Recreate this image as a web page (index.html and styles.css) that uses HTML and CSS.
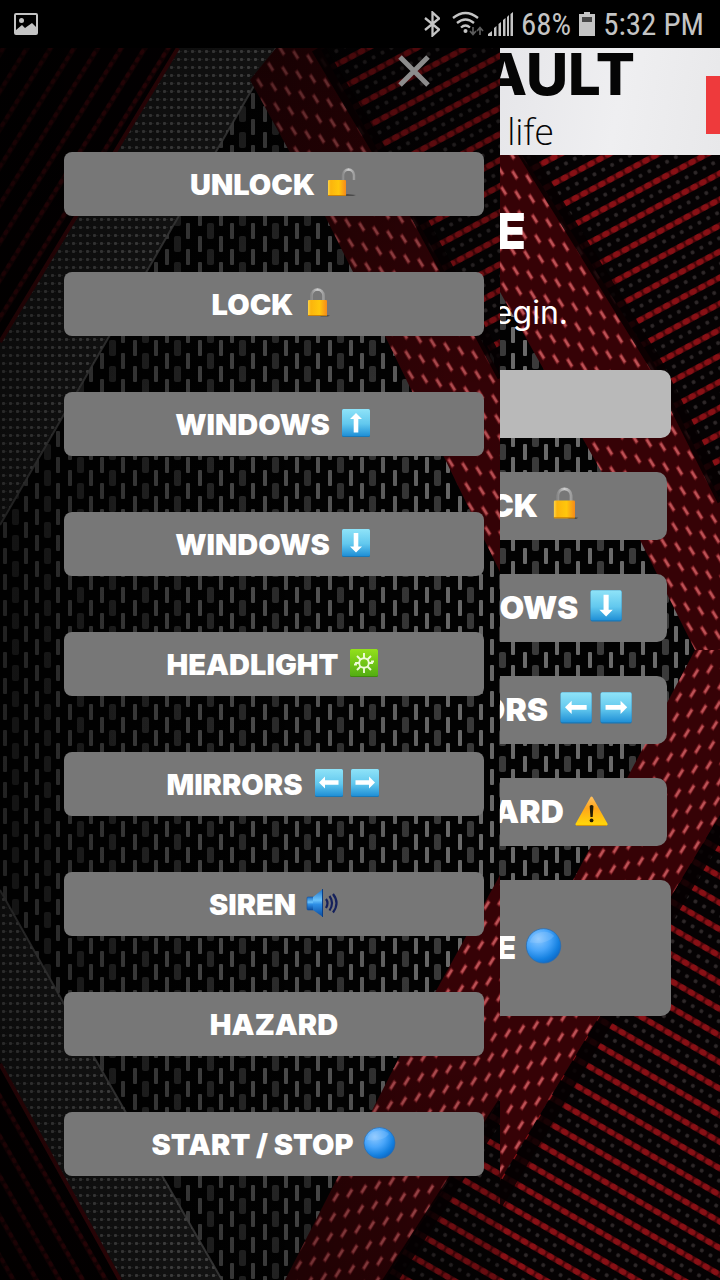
FILE: index.html
```html
<!DOCTYPE html>
<html lang="en">
<head>
<meta charset="utf-8">
<meta name="viewport" content="width=device-width, initial-scale=1">
<title>Remote</title>
<link rel="stylesheet" href="styles.css">
</head>
<body>
<svg class="defs" aria-hidden="true">
  <defs>
    <pattern id="mesh" width="65" height="26" patternUnits="userSpaceOnUse">
      <rect width="65" height="26" fill="#020202"/>
      <g fill="#6a6a6a">
        <rect x="3" y="2" width="4" height="16" rx="1"/>
        <rect x="24" y="2" width="4" height="16" rx="1"/>
        <rect x="35" y="-11" width="4" height="16" rx="1"/><rect x="35" y="15" width="4" height="16" rx="1"/>
        <rect x="56" y="-11" width="4" height="16" rx="1"/><rect x="56" y="15" width="4" height="16" rx="1"/>
      </g>
      <g fill="#3a3a3a">
        <rect x="12" y="-11" width="7" height="16" rx="2"/><rect x="12" y="15" width="7" height="16" rx="2"/>
        <rect x="44" y="2" width="7" height="16" rx="2"/>
      </g>
    </pattern>
    <pattern id="grain" width="7" height="8" patternUnits="userSpaceOnUse">
      <rect width="7" height="8" fill="#262626"/>
      <rect x="2" y="2" width="3" height="3" rx="1" fill="#858585"/>
      <rect x="5" y="3" width="2" height="1" fill="#484848"/>
    </pattern>
    <pattern id="strap-down" width="1" height="1" patternUnits="userSpaceOnUse" patternTransform="matrix(14 4 3 20 0 0)">
      <rect width="1" height="1" fill="#360206"/>
      <path d="M.3 .26L.6 .64" stroke="#7d1c22" stroke-width=".32"/>
      <path d="M.34 .3L.58 .6" stroke="#bd5357" stroke-width=".18"/>
    </pattern>
    <pattern id="strap-up" width="1" height="1" patternUnits="userSpaceOnUse" patternTransform="matrix(14 -4 3 -20 0 0)">
      <rect width="1" height="1" fill="#360206"/>
      <path d="M.3 .26L.6 .64" stroke="#7d1c22" stroke-width=".32"/>
      <path d="M.34 .3L.58 .6" stroke="#bd5357" stroke-width=".18"/>
    </pattern>
    <pattern id="rib-up" width="10" height="23" patternUnits="userSpaceOnUse" patternTransform="rotate(-28)">
      <rect width="10" height="23" fill="#050203"/>
      <rect y="5" width="10" height="6" fill="#4a0509"/>
      <ellipse cx="5" cy="8" rx="4" ry="3" fill="#881015"/>
      <ellipse cx="3" cy="19" rx="2" ry="2" fill="#2f292a"/>
    </pattern>
    <pattern id="rib-down" width="10" height="23" patternUnits="userSpaceOnUse" patternTransform="rotate(30)">
      <rect width="10" height="23" fill="#050203"/>
      <rect y="5" width="10" height="6" fill="#4a0509"/>
      <ellipse cx="5" cy="8" rx="4" ry="3" fill="#881015"/>
      <ellipse cx="3" cy="19" rx="2" ry="2" fill="#2f292a"/>
    </pattern>
    <pattern id="dim-up" width="9" height="20" patternUnits="userSpaceOnUse" patternTransform="rotate(-58)">
      <rect width="9" height="20" fill="#060001"/>
      <rect y="6" width="9" height="5" fill="#300307"/>
      <ellipse cx="4" cy="8" rx="3" ry="2" fill="#6a0a11"/>
    </pattern>
    <pattern id="dim-down" width="9" height="20" patternUnits="userSpaceOnUse" patternTransform="rotate(60)">
      <rect width="9" height="20" fill="#060001"/>
      <rect y="6" width="9" height="5" fill="#300307"/>
      <ellipse cx="4" cy="8" rx="3" ry="2" fill="#6a0a11"/>
    </pattern>
    <linearGradient id="shade" x1="0" x2="1" y1="0" y2="0">
      <stop offset="0" stop-color="#000" stop-opacity=".68"/>
      <stop offset=".9" stop-color="#000" stop-opacity="0"/>
    </linearGradient>
    <linearGradient id="shade-top" x1="0" x2="0" y1="0" y2="1">
      <stop offset="0" stop-color="#000" stop-opacity=".4"/>
      <stop offset=".3" stop-color="#000" stop-opacity=".05"/>
      <stop offset=".75" stop-color="#000" stop-opacity="0"/>
      <stop offset="1" stop-color="#000" stop-opacity=".25"/>
    </linearGradient>
    <linearGradient id="sky" x1="0" x2="0" y1="0" y2="1">
      <stop offset="0" stop-color="#8fe3f8"/><stop offset=".55" stop-color="#62c8ee"/><stop offset="1" stop-color="#1f8fd6"/>
    </linearGradient>
    <linearGradient id="leaf" x1="0" x2="0" y1="0" y2="1">
      <stop offset="0" stop-color="#93e01c"/><stop offset="1" stop-color="#53ad12"/>
    </linearGradient>
    <linearGradient id="gold" x1="0" x2="1" y1="0" y2="0">
      <stop offset="0" stop-color="#fdd54a"/><stop offset=".15" stop-color="#fbb40d"/><stop offset=".6" stop-color="#ffc70c"/><stop offset="1" stop-color="#f58a1a"/>
    </linearGradient>
    <linearGradient id="steel" x1="0" x2="1" y1="0" y2="0">
      <stop offset="0" stop-color="#8a8a8a"/><stop offset=".5" stop-color="#cfcfcf"/><stop offset="1" stop-color="#9c9c9c"/>
    </linearGradient>
    <linearGradient id="amber" x1="0" x2="0" y1="0" y2="1">
      <stop offset="0" stop-color="#ffbf5a"/><stop offset=".4" stop-color="#ffa51a"/><stop offset="1" stop-color="#ffd60a"/>
    </linearGradient>
    <linearGradient id="horn" x1="0" x2="0" y1="0" y2="1">
      <stop offset="0" stop-color="#1c6fc4"/><stop offset=".4" stop-color="#6cc3fb"/><stop offset=".55" stop-color="#2e8fe6"/><stop offset="1" stop-color="#0b4da0"/>
    </linearGradient>
    <radialGradient id="ball" cx=".35" cy=".3" r=".75">
      <stop offset="0" stop-color="#8cc8ff"/><stop offset=".45" stop-color="#4aa6fa"/><stop offset=".8" stop-color="#1480e0"/><stop offset="1" stop-color="#0f68c4"/>
    </radialGradient>
    <symbol id="i-unlock" viewBox="0 0 36 36">
      <path d="M20 30h11l3-1-9-1z" fill="#4b4b4b"/>
      <path d="M21 15V9a5.500 5.500 0 0 1 11 0v5" fill="none" stroke="url(#steel)" stroke-width="2.400"/>
      <rect x="6" y="14" width="18" height="16" rx="1" fill="url(#gold)"/>
      <path d="M6 29.500h18" stroke="#c98008"/>
    </symbol>
    <symbol id="i-lock" viewBox="0 0 36 36">
      <path d="M20 30.500h8l2-1-6-1z" fill="#4b4b4b"/>
      <path d="M11.500 15V9.500a6 6 0 0 1 12 0V15" fill="none" stroke="url(#steel)" stroke-width="2.500"/>
      <rect x="8" y="14" width="19" height="16" rx="1" fill="url(#gold)"/>
      <path d="M8 29.500h19" stroke="#c98008"/>
    </symbol>
    <symbol id="i-up" viewBox="0 0 36 36">
      <rect x="5" y="3" width="28" height="28" rx="1.500" fill="#1a77b5"/><rect x="5" y="3" width="28" height="27" rx="1.500" fill="url(#sky)"/>
      <path d="M19 7l6 6h-3.700v13.500h-4.600V13H13z" fill="#fff"/>
    </symbol>
    <symbol id="i-down" viewBox="0 0 36 36">
      <rect x="5" y="3" width="28" height="28" rx="1.500" fill="#1a77b5"/><rect x="5" y="3" width="28" height="27" rx="1.500" fill="url(#sky)"/>
      <path d="M19 26.500l6-6h-3.700V7h-4.600v13.500H13z" fill="#fff"/>
    </symbol>
    <symbol id="i-left" viewBox="0 0 36 36">
      <rect x="5" y="3" width="28" height="28" rx="1.500" fill="#1a77b5"/><rect x="5" y="3" width="28" height="27" rx="1.500" fill="url(#sky)"/>
      <path d="M9 16.500l6-6v3.800h13.500v4.400H15v3.800z" fill="#fff"/>
    </symbol>
    <symbol id="i-right" viewBox="0 0 36 36">
      <rect x="5" y="3" width="28" height="28" rx="1.500" fill="#1a77b5"/><rect x="5" y="3" width="28" height="27" rx="1.500" fill="url(#sky)"/>
      <path d="M29 16.500l-6-6v3.800H9.500v4.400H23v3.800z" fill="#fff"/>
    </symbol>
    <symbol id="i-light" viewBox="0 0 36 36">
      <rect x="5" y="3" width="28" height="28" rx="1.500" fill="#3f8a0c"/><rect x="5" y="3" width="28" height="27" rx="1.500" fill="url(#leaf)"/>
      <g fill="none" stroke="#eefbd8" stroke-width="1.900">
        <circle cx="19" cy="17" r="4.800"/>
        <path d="M19 12V7M19 22v5M14.500 17H11v1.500H9M23.500 17H27v-1.500h2M15.500 13.500L12 10M22.500 13.500L26 10M15.500 20.500L12 24M22.500 20.500L26 24"/>
      </g>
    </symbol>
    <symbol id="i-horn" viewBox="0 0 36 36">
      <rect x="4" y="11" width="7" height="13" rx="1" fill="url(#horn)" stroke="#114f9a" stroke-width=".6"/>
      <path d="M10 11L20 3v28L10 24z" fill="url(#horn)"/><path d="M19.500 3v28" stroke="#0a3f88"/>
      <g fill="none" stroke="#14205c" stroke-width="2.200"><path d="M23 13q3 4 0 9M26.500 10q5 7 0 14.500M30 8q7 9 0 18.500"/></g>
    </symbol>
    <symbol id="i-ball" viewBox="0 0 36 36">
      <circle cx="18.500" cy="17" r="15.500" fill="url(#ball)" stroke="#2b6db0" stroke-width=".7"/>
      <path d="M6 14a13 12 0 0 1 22-6q-6 8-22 6z" fill="#b7ddff" opacity=".2"/>
    </symbol>
    <symbol id="i-warn" viewBox="0 0 36 36">
      <path d="M18.500 6L32 30H5z" fill="url(#amber)" stroke="url(#amber)" stroke-width="2" stroke-linejoin="round"/>
      <path d="M5 31h27" stroke="#d99000" stroke-width=".8"/>
      <path d="M16.800 13.500q1.700-2 3.400 0l-.7 10h-2z" fill="#221a05"/><circle cx="18.500" cy="26.500" r="1.700" fill="#221a05"/>
    </symbol>
  </defs>
</svg>

<header class="status">
  <svg class="status-photo" viewBox="0 0 24 22" aria-hidden="true"><path fill="#c4c4c4" fill-rule="evenodd" d="M2 0h20a2 2 0 0 1 2 2v18a2 2 0 0 1-2 2H2a2 2 0 0 1-2-2V2A2 2 0 0 1 2 0zm0 2v15l6-5 3 3 7-5 4 4V2z"/><circle cx="7.500" cy="7.500" r="2.500" fill="#c4c4c4"/></svg>
  <span class="status-fill"></span>
  <svg class="status-bt" viewBox="0 0 16 26" aria-hidden="true"><path d="M1 7l14 11.500-6.500 6V1.500L15 7.500 1 19" fill="none" stroke="#c4c4c4" stroke-width="2.300"/></svg>
  <svg class="status-wifi" viewBox="0 0 32 26" aria-hidden="true">
    <g fill="none" stroke="#c4c4c4" stroke-width="2.300"><path d="M1 7q12.500-10 25 0M5 12q8.500-7 17 0M9 16.500q4.500-4 9 0"/></g>
    <circle cx="13.500" cy="20" r="2" fill="#c4c4c4"/>
    <path d="M21 16v7m-3-3l3 3.500 3-3.500M28 24v-7m-3 3l3-3.500 3 3.500" fill="none" stroke="#5c5c5c" stroke-width="1.700"/>
  </svg>
  <svg class="status-signal" viewBox="0 0 25 24" aria-hidden="true"><path d="M0 24v-2l4-3v5zM6 24v-8l2.500-2v10zM10.500 24V12l2.500-2v14zM15 24V8l2.500-2v18zM19 24V5l2-2v21zM22.500 24V2L25 0v24z" fill="#c4c4c4"/></svg>
  <span class="status-text">68%</span>
  <svg class="status-battery" viewBox="0 0 16 24" aria-hidden="true"><path d="M5 0h6v2h5v22H0V2h5z" fill="#c4c4c4"/><path d="M3 5h10v5H3z" fill="#484848"/></svg>
  <span class="status-text">5:32 PM</span>
</header>

<div class="app">
  <main class="page">
    <svg class="scene" viewBox="0 48 720 1232" preserveAspectRatio="xMaxYMid slice" aria-hidden="true">
      <rect y="48" width="720" height="1232" fill="url(#mesh)"/>
      <path d="M440 48h280v470L690 440 640 355 545 190z" fill="url(#rib-up)"/>
      <path d="M720 810L600 1015 430 1280h290z" fill="url(#rib-down)"/>
      <path d="M340 48h110L545 190 655 365 720 500V700L695 650 640 540 500 292z" fill="url(#strap-down)"/>
      <path d="M720 650h-25L572 882 360 1280h80L600 1015 720 815z" fill="url(#strap-up)"/>
      <path d="M460 48L548 190 656 365 724 500M724 822L600 1030 450 1280" fill="none" stroke="#060001" stroke-opacity=".85" stroke-width="14"/>
    </svg>
    <div class="banner">
      <div class="brand">RENAULT</div>
      <div class="slogan">life</div>
      <span class="banner-mark"></span>
    </div>
    <h1 class="title">E</h1>
    <p class="hint">begin.</p>
    <div class="controls">
      <input class="field" type="text" aria-label="Device">
      <div class="column">
        <button class="key">LOCK <svg viewBox="0 0 36 36"><use href="#i-lock"/></svg></button>
        <button class="key">WINDOWS <svg viewBox="0 0 36 36"><use href="#i-down"/></svg></button>
        <button class="key">MIRRORS <span class="pair"><svg viewBox="0 0 36 36"><use href="#i-left"/></svg><svg viewBox="0 0 36 36"><use href="#i-right"/></svg></span></button>
        <button class="key">HAZARD <svg viewBox="0 0 36 36"><use href="#i-warn"/></svg></button>
      </div>
      <button class="key key-wide">E <svg viewBox="0 0 36 36"><use href="#i-ball"/></svg></button>
    </div>
  </main>

  <nav class="drawer" aria-label="Commands">
    <svg class="scene" viewBox="0 48 500 1232" preserveAspectRatio="xMaxYMid slice" aria-hidden="true">
      <rect y="48" width="500" height="1232" fill="url(#mesh)"/>
      <path d="M0 48h180L0 345z" fill="url(#dim-up)"/>
      <path d="M178 48h98L0 525V340z" fill="url(#grain)"/>
      <path d="M0 890l90 160 132 230H120L0 1062z" fill="url(#grain)"/>
      <path d="M276 48L0 525M0 890l90 160 132 230" fill="none" stroke="#7a7a7a" stroke-opacity=".8" stroke-width="2"/>
      <path d="M0 1062l122 218H0z" fill="url(#dim-down)"/>
      <path d="M178 48L0 342M0 1064l120 216" fill="none" stroke="#6a0a10" stroke-width="4"/>
      <path d="M310 48h190v320z" fill="url(#rib-up)"/>
      <path d="M500 1100v180H385z" fill="url(#rib-down)"/>
      <path d="M276 48h44L415 216 500 375V572L385 336 325 216 250 80z" fill="url(#strap-down)"/>
      <path d="M500 875v225L385 1280H285L400 1056z" fill="url(#strap-up)"/>
      <path d="M318 48L418 216 504 376M504 1104L388 1284" fill="none" stroke="#060001" stroke-opacity=".85" stroke-width="14"/>
      <rect y="48" width="500" height="1232" fill="url(#shade)"/>
      <rect y="48" width="500" height="1232" fill="url(#shade-top)"/>
    </svg>
    <div class="drawer-head">
      <button class="close" aria-label="Close"><svg viewBox="0 0 32 32"><path d="M2 2l28 28M30 2L2 30" stroke="#8c8c8c" stroke-width="5"/></svg></button>
    </div>
    <div class="menu">
      <button class="item">UNLOCK <svg viewBox="0 0 36 36"><use href="#i-unlock"/></svg></button>
      <button class="item">LOCK <svg viewBox="0 0 36 36"><use href="#i-lock"/></svg></button>
      <button class="item">WINDOWS <svg viewBox="0 0 36 36"><use href="#i-up"/></svg></button>
      <button class="item">WINDOWS <svg viewBox="0 0 36 36"><use href="#i-down"/></svg></button>
      <button class="item">HEADLIGHT <svg viewBox="0 0 36 36"><use href="#i-light"/></svg></button>
      <button class="item">MIRRORS <span class="pair"><svg viewBox="0 0 36 36"><use href="#i-left"/></svg><svg viewBox="0 0 36 36"><use href="#i-right"/></svg></span></button>
      <button class="item">SIREN <svg viewBox="0 0 36 36"><use href="#i-horn"/></svg></button>
      <button class="item">HAZARD</button>
      <button class="item">START / STOP <svg viewBox="0 0 36 36"><use href="#i-ball"/></svg></button>
    </div>
  </nav>
</div>
</body>
</html>
```

FILE: styles.css
```css
* {
  box-sizing: border-box;
}

body {
  margin: 0;
  min-height: 100vh;
  display: flex;
  flex-direction: column;
  background: #000;
  color: #fff;
  font-family: Inter, "Liberation Sans", sans-serif;
}

button,
input {
  margin: 0;
  border: 0;
  font: inherit;
  color: inherit;
}

.defs {
  position: absolute;
  width: 0;
  height: 0;
}

/* Status bar */
.status {
  display: flex;
  align-items: center;
  height: 48px;
  padding: 0 16px 0 14px;
  color: #c4c4c4;
  font-family: "Roboto Condensed", Roboto, sans-serif;
}

.status-photo { width: 24px; height: 22px; }
.status-fill { flex: 1; }
.status-bt { width: 16px; height: 26px; margin-right: 12px; }
.status-wifi { width: 32px; height: 26px; margin-right: 4px; }
.status-signal { width: 25px; height: 24px; margin-right: 8px; }
.status-battery { width: 16px; height: 24px; margin: 0 8px; }

.status-text {
  padding-top: 2px;
  font-size: 31px;
  line-height: 46px;
}

/* Page under the drawer */
.app {
  position: relative;
  flex: 1;
  display: grid;
  overflow: hidden;
}

.page,
.drawer {
  position: relative;
  isolation: isolate;
}

.scene {
  position: absolute;
  inset: 0;
  z-index: -1;
  width: 100%;
  height: 100%;
}

.page {
  grid-area: 1 / 1;
}

.banner {
  position: relative;
  height: 107px;
  background: linear-gradient(100deg, #e2e2e6 60%, #efeff1 85%, #e8e8ea);
  color: #050505;
  text-align: right;
}

.brand {
  padding-right: 85px;
  font-size: 58px;
  font-weight: 800;
  line-height: 52px;
}

.slogan {
  padding: 6px 166px 0 0;
  font-family: "Open Sans", sans-serif;
  font-size: 36px;
  font-weight: 300;
  line-height: 52px;
}

.banner-mark {
  position: absolute;
  top: 28px;
  right: 0;
  width: 14px;
  height: 58px;
  background: #ee3a3c;
}

.title {
  margin: 52px 194px 0 0;
  font-size: 50px;
  font-weight: 900;
  line-height: 48px;
  text-align: right;
}

.hint {
  margin: 32px 152px 0 0;
  font-size: 32px;
  line-height: 52px;
  text-align: right;
}

.controls {
  display: flex;
  flex-direction: column;
  gap: 34px;
  margin: 31px 49px 0;
}

.field {
  width: 100%;
  height: 68px;
  border-radius: 10px;
  background: #b9b9b9;
}

.column {
  display: flex;
  flex-direction: column;
  gap: 34px;
  margin: 0 4px 0 50%;
}

.key,
.item {
  display: flex;
  align-items: center;
  justify-content: center;
  padding: 0;
  background: #777;
  color: #fff;
  font-weight: 900;
  white-space: nowrap;
}

.key {
  gap: 7px;
  height: 68px;
  padding: 0 0 2px 6px;
  border-radius: 10px;
  font-size: 32px;
}

.key svg {
  width: 40px;
  height: 40px;
}

.key-wide {
  justify-content: flex-end;
  height: 136px;
  padding-right: 108px;
}

.pair {
  display: flex;
}

/* Drawer */
.drawer {
  grid-area: 1 / 1;
  width: calc(100% - 220px);
  padding: 0 16px 104px 64px;
  background: #000;
}

.drawer-head {
  display: flex;
  justify-content: flex-end;
  height: 104px;
  padding: 7px 54px 0 0;
}

.close {
  width: 32px;
  height: 32px;
  padding: 0;
  background: none;
}

.close svg {
  display: block;
}

.menu {
  display: flex;
  flex-direction: column;
  gap: 56px;
}

.item {
  gap: 7px;
  height: 64px;
  border-radius: 8px;
  font-size: 29px;
}

.item svg {
  width: 36px;
  height: 36px;
}
```
